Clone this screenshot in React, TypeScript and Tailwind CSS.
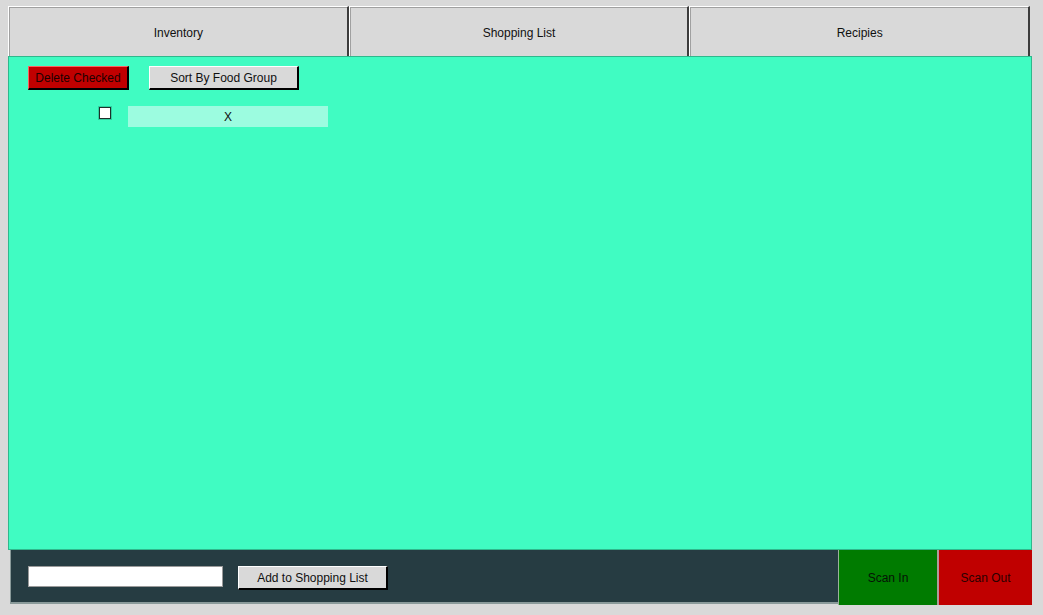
import React from "react";

const font = { fontFamily: "'Liberation Sans', Arial, sans-serif" };

function Tab({ label }: { label: string }) {
  return (
    <div className="flex-1 h-[50px] border-t border-l border-white border-r-2 border-r-[#3c3c3c] bg-[#d9d9d9]">
      <div className="h-full border-t border-l border-[#a0a0a0] flex items-center justify-center text-[12px] text-[#101010] pt-[2px]">
        {label}
      </div>
    </div>
  );
}

export default function App() {
  return (
    <div className="w-[1043px] h-[615px] bg-[#d9d9d9] pt-[6px] relative overflow-hidden" style={font}>
      <div className="flex ml-[8px] w-[1022px]">
        <Tab label="Inventory" />
        <Tab label="Shopping List" />
        <Tab label="Recipies" />
      </div>
      <div className="ml-[8px] w-[1024px] h-[494px] bg-[#40fcc2] border border-[#2fb88c] pt-[9px]">
        <div className="flex gap-[20px] pl-[19px]">
          <div className="w-[101px] h-[24px] bg-[#c00000] border-t border-l border-[#ff6060] border-r-2 border-b-2 border-r-black border-b-black flex items-center justify-center text-[12px] text-[#200000]">
            Delete Checked
          </div>
          <div className="w-[150px] h-[24px] bg-[#d9d9d9] border-t border-l border-white border-r-2 border-b-2 border-r-black border-b-black flex items-center justify-center text-[12px] text-[#101010]">
            Sort By Food Group
          </div>
        </div>
        <div className="flex items-start mt-[16px] pl-[90px]">
          <div className="w-[12px] h-[12px] mt-[1px] bg-white border border-[#1f2f2a] outline outline-1 outline-[#2fd0a0]" />
          <div className="ml-[17px] w-[200px] h-[21px] bg-[#9cfce0] flex items-center justify-center text-[12px] text-[#101010]">
            X
          </div>
        </div>
      </div>
      <div className="flex ml-[10px]">
        <div className="w-[828px] h-[54px] bg-[#263c42] border-l border-b-2 border-[#8a9a9a] flex items-center pl-[17px]">
          <div className="w-[195px] h-[21px] bg-white border border-[#9a9a9a]" />
          <div className="ml-[15px] w-[150px] h-[24px] bg-[#d9d9d9] border-t border-l border-white border-r-2 border-b-2 border-r-black border-b-black flex items-center justify-center text-[12px] text-[#101010] mt-[4px]">
            Add to Shopping List
          </div>
        </div>
        <div className="w-[99px] h-[55px] bg-[#007b00] border-l border-[#9ab09a] flex items-center justify-center text-[12px] text-[#061206]">
          Scan In
        </div>
        <div className="w-[95px] h-[55px] bg-[#c00000] border-l-2 border-[#b09a9a] flex items-center justify-center text-[12px] text-[#2a0000]">
          Scan Out
        </div>
      </div>
    </div>
  );
}
